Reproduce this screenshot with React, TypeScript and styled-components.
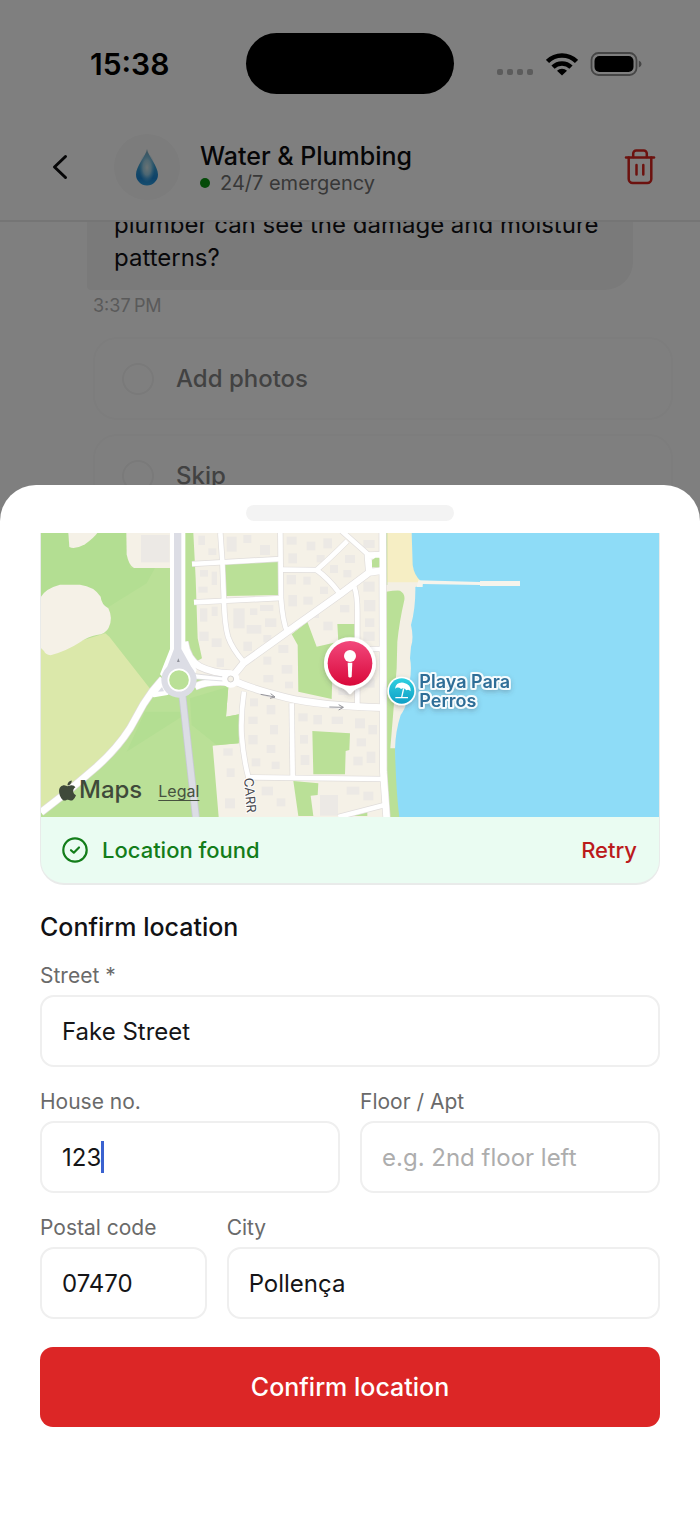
import React, { useState } from "react";
import styled, { createGlobalStyle } from "styled-components";
import { FaApple } from "react-icons/fa";

const GlobalStyle = createGlobalStyle`
  *, *::before, *::after { box-sizing: border-box; }
  body { margin: 0; background: #fff; font-family: Inter, "Noto Sans", sans-serif; color: #111114; }
  button, input { font: inherit; color: inherit; }
`;

const Screen = styled.div`
  position: relative;
  min-height: 100vh;
  display: flex;
  flex-direction: column;
  justify-content: flex-end;
  padding-top: 240px;
`;

/* Chat behind the sheet */

const Backdrop = styled.div`
  position: absolute;
  inset: 0;
  overflow: hidden;
  display: flex;
  flex-direction: column;

  &::after {
    content: "";
    position: absolute;
    inset: 0;
    background: rgba(0, 0, 0, 0.5);
  }
`;

const StatusBar = styled.div`
  display: grid;
  grid-template-columns: 1fr auto 1fr;
  align-items: center;
  padding: 33px 58px 0 90px;
  column-gap: 16px;
`;

const Clock = styled.time`
  font-size: 30px;
  font-weight: 600;
  color: #000;
`;

const Island = styled.div`
  width: 208px;
  height: 61px;
  margin-left: -16px;
  margin-right: 16px;
  border-radius: 31px;
  background: #000;
`;

const StatusIcons = styled.div`
  display: flex;
  align-items: center;
  justify-content: flex-end;
  gap: 12px;
`;

const Header = styled.header`
  display: flex;
  align-items: center;
  height: 128px;
  padding: 20px 44px 0 52px;
  border-bottom: 2px solid #ebebeb;
`;

const IconButton = styled.button`
  display: flex;
  padding: 0;
  border: 0;
  background: none;
`;

const Avatar = styled.div`
  display: flex;
  align-items: center;
  justify-content: center;
  width: 66px;
  height: 66px;
  margin: 0 20px 0 46px;
  border-radius: 50%;
  background: #f8f8f8;
`;

const HeaderText = styled.div`
  flex: 1;
  padding-top: 3px;
`;

const HeaderTitle = styled.h1`
  margin: 0;
  font-size: 25px;
  line-height: 28px;
  font-weight: 500;
  color: #0c0c0e;
`;

const Presence = styled.div`
  display: flex;
  align-items: center;
  gap: 10px;
  font-size: 20px;
  line-height: 26px;
  color: #717171;

  &::before {
    content: "";
    width: 10px;
    height: 10px;
    border-radius: 50%;
    background: #0a9612;
  }
`;

const Messages = styled.main`
  flex: 1;
  min-height: 0;
  overflow: hidden;
  padding: 0 27px 0 87px;
`;

const Bubble = styled.p`
  max-width: 546px;
  margin: -30px 0 0;
  padding: 16px 27px;
  border-radius: 28px 28px 28px 4px;
  background: #f4f4f4;
  font-size: 24px;
  line-height: 33px;
`;

const Timestamp = styled.time`
  display: block;
  margin: 4px 0 19px 6px;
  font-size: 18px;
  line-height: 24px;
  color: #b4b4b4;
`;

const Options = styled.div`
  display: grid;
  gap: 14px;
  padding-left: 6px;
`;

const Option = styled.label`
  display: flex;
  align-items: center;
  gap: 22px;
  height: 83px;
  padding-left: 27px;
  border: 2px solid #fafafa;
  border-radius: 24px;
  font-size: 24px;
  font-weight: 500;
  color: #858585;
`;

const Radio = styled.input`
  appearance: none;
  width: 32px;
  height: 32px;
  margin: 0;
  border: 2px solid #f4f4f4;
  border-radius: 50%;
`;

/* Bottom sheet */

const Sheet = styled.section`
  position: relative;
  padding: 20px 40px 93px;
  border-radius: 36px 36px 0 0;
  background: #fff;
`;

const Grabber = styled.div`
  width: 208px;
  height: 16px;
  margin: 0 auto 12px;
  border-radius: 8px;
  background: #f3f3f3;
`;

const MapCard = styled.div`
  overflow: hidden;
  border: solid #e9ebea;
  border-width: 0 1px 2px;
  border-radius: 0 0 24px 24px;
  background: #eafcf2;
`;

const MapView = styled.div`
  position: relative;

  > svg {
    display: block;
    width: 100%;
    height: 284px;
  }
`;

const Attribution = styled.div`
  position: absolute;
  left: 15px;
  bottom: 11px;
  display: flex;
  align-items: center;
  color: #3f4a3a;
`;

const Brand = styled.span`
  display: flex;
  align-items: center;
  font-size: 24px;
  line-height: 32px;
  font-weight: 500;
`;

const LegalLink = styled.a`
  margin-left: 16px;
  padding-top: 2px;
  font-size: 16px;
  line-height: 30px;
  color: #47523f;
  text-underline-offset: 3px;
`;

const Result = styled.div`
  display: flex;
  align-items: center;
  gap: 14px;
  height: 66px;
  padding: 0 22px 0 21px;
  font-size: 22px;
  font-weight: 500;
  color: #137d1a;
`;

const RetryButton = styled.button`
  margin-left: auto;
  padding: 0;
  border: 0;
  background: none;
  font-weight: 500;
  color: #bb1a1c;
`;

const Form = styled.form`
  display: grid;
  gap: 20px;
`;

const FormTitle = styled.h2`
  margin: 26px 0 -2px;
  font-size: 25px;
  line-height: 32px;
  font-weight: 500;
`;

const Row = styled.div<{ $columns: string }>`
  display: grid;
  grid-template-columns: ${(p) => p.$columns};
  gap: 20px;
`;

const Field = styled.label`
  display: grid;
  gap: 4px;
  min-width: 0;
  font-size: 21px;
  line-height: 30px;
  color: #6a6a6a;
`;

const Control = styled.span<{ $caret?: boolean }>`
  position: relative;
  display: block;

  &::after {
    content: "";
    display: ${(p) => (p.$caret ? "block" : "none")};
    position: absolute;
    left: 61px;
    top: 20px;
    width: 3px;
    height: 32px;
    background: #3a62d0;
  }
`;

const TextInput = styled.input`
  display: block;
  width: 100%;
  height: 72px;
  padding: 0 20px;
  border: 2px solid #efefef;
  border-radius: 14px;
  outline: 0;
  background: #fff;
  font-size: 24px;
  color: #151517;

  &::placeholder {
    color: #adadad;
    opacity: 1;
  }
`;

const SubmitButton = styled.button`
  height: 80px;
  margin-top: 8px;
  border: 0;
  border-radius: 13px;
  background: #dc2626;
  font-size: 25px;
  font-weight: 500;
  color: #fff;
`;

/* Map artwork, drawn at three units to the pixel */

const thinStreets = [
  "M571 24 L577 110 L582 230 Q584 300 594 335 Q606 370 642 412",
  "M486 117 L750 102",
  "M492 232 L756 219",
  "M751 24 L753 220 Q758 290 772 322",
  "M753 134 L860 135 Q900 100 952 48",
  "M860 135 Q895 160 928 204",
  "M935 18 L1022 95",
  "M973 185 Q982 210 982 260 L982 540",
  "M982 372 L1060 372",
  "M785 535 L788 756",
  "M642 500 Q632 570 635 630 Q640 700 656 760",
  "M652 757 L1060 762",
  "M925 876 L1064 840",
];

const wideStreets = [
  "M33 862 L110 802 L200 725 Q262 670 300 610 L340 538 L366 500 L398 462",
  "M602 462 L640 415 L770 322 L930 208 L1018 142 L1060 136",
  "M1018 142 L1014 92 L1060 90",
  "M602 462 Q650 488 770 518 Q870 542 1060 548",
  "M1058 24 L1060 740 L1070 880",
  "M464 350 Q472 405 510 425 Q548 444 602 446",
  "M495 485 Q535 466 602 472",
];

const greens = [
  "584,112 745,108 745,210 588,213",
  "785,328 832,290 860,365 925,350 922,297 974,297 974,345 910,362 905,522 805,500 803,360",
  "847,618 960,625 958,675 947,678 945,748 850,748",
  "790,768 865,775 863,810 842,812 850,873 805,873",
  "965,873 1012,862 1012,873",
];

const buildings: [number, number, number, number][] = [
  [333, 30, 86, 82], [505, 32, 20, 28], [535, 70, 24, 20], [510, 135, 24, 20], [545, 140, 16, 40],
  [505, 185, 28, 18], [510, 250, 22, 40], [545, 245, 18, 28], [508, 320, 28, 28], [545, 340, 30, 26],
  [560, 400, 22, 26], [590, 35, 30, 45], [640, 30, 24, 24], [690, 60, 30, 30], [610, 250, 34, 60],
  [660, 250, 22, 20], [690, 240, 40, 18], [705, 280, 34, 26], [650, 300, 44, 26], [640, 350, 26, 28],
  [700, 330, 24, 22], [770, 35, 30, 24], [775, 85, 26, 30], [830, 50, 26, 26], [880, 40, 26, 30],
  [860, 90, 24, 22], [770, 150, 28, 28], [820, 155, 22, 24], [775, 210, 26, 34], [820, 215, 28, 24],
  [870, 185, 24, 22], [900, 120, 24, 24], [945, 90, 30, 24], [940, 135, 24, 22], [1000, 45, 34, 24],
  [1000, 170, 34, 30], [1002, 225, 34, 34], [1005, 280, 28, 26], [1000, 320, 34, 28], [930, 240, 28, 22],
  [880, 290, 28, 26], [845, 255, 22, 24], [745, 360, 30, 24], [700, 395, 24, 24], [755, 420, 32, 26],
  [700, 450, 30, 22], [765, 470, 24, 20], [1000, 400, 30, 34], [1000, 460, 34, 28], [925, 460, 36, 50],
  [660, 520, 24, 24], [710, 540, 26, 28], [655, 575, 28, 22], [720, 600, 24, 28], [655, 630, 28, 28],
  [710, 660, 26, 24], [665, 700, 26, 24], [725, 710, 24, 22], [805, 565, 28, 24], [850, 570, 26, 28],
  [905, 575, 34, 22], [975, 580, 30, 30], [1015, 600, 26, 28], [980, 640, 28, 24], [810, 630, 24, 26],
  [812, 690, 26, 30], [970, 695, 28, 26], [1010, 680, 26, 34], [870, 810, 54, 62], [950, 785, 38, 24],
  [1000, 800, 30, 26], [695, 785, 34, 26], [740, 820, 26, 24], [580, 670, 28, 22],
  [590, 730, 24, 26], [585, 820, 30, 30],
];

const TownMap = () => (
  <svg viewBox="33 24 1854 852" preserveAspectRatio="xMidYMid slice" role="img" aria-label="Map of the found location">
    <defs>
      <linearGradient id="pin" x1="0" y1="0" x2="0" y2="1">
        <stop offset="0" stopColor="#f2487c" />
        <stop offset="1" stopColor="#d9083a" />
      </linearGradient>
      <linearGradient id="beach" x1="0" y1="0" x2="0" y2="1">
        <stop offset="0" stopColor="#2fd0e0" />
        <stop offset="1" stopColor="#0f9fc6" />
      </linearGradient>
      <filter id="shadow" x="-30%" y="-30%" width="160%" height="170%">
        <feDropShadow dx="0" dy="6" stdDeviation="8" floodColor="#3c3c50" floodOpacity="0.3" />
      </filter>
    </defs>
    <rect x="33" y="24" width="1854" height="852" fill="#f5f1e7" />

    {/* fields and parks */}
    <path d="M33 24H490L497 160L503 340L516 400L510 420L595 485L588 575L628 568L626 655L548 662L566 876H33Z" fill="#bae097" />
    <path d="M33 24H290L300 129H375L350 175L232 248L150 190L33 215Z" fill="#b3de92" />
    <path d="M480 520L595 485L588 575L628 568L626 655L560 660L485 600Z" fill="#b3de92" />
    <path d="M290 680L345 560L450 560L455 575Z" fill="#b3de92" />
    <path d="M115 24L118 66Q135 74 165 58Q192 38 202 24Z" fill="#f5f1e7" />
    <path d="M289 24L290 88Q296 122 312 129H424V24Z" fill="#f5f1e7" />
    <path d="M33 370L60 390L160 345L226 325L238 335L365 497L300 610L200 725L33 862Z" fill="#dbe8aa" />
    <path d="M33 215Q48 190 90 179L150 179Q192 184 212 215Q214 238 235 250Q250 280 236 308Q228 326 200 330Q175 334 150 352Q110 378 62 391Q45 388 42 378L33 370Z" fill="#f5f1e7" />
    <path d="M490 415L516 400L600 440V462H496Z" fill="#f5f1e7" />
    {greens.map((points) => <polygon key={points} points={points} fill="#bae097" />)}
    {buildings.map(([x, y, w, h]) => <rect key={`${x}-${y}`} x={x} y={y} width={w} height={h} fill="#ece9e5" />)}

    {/* coast */}
    <path d="M1066 24H1145L1150 130L1180 175L1068 180Z" fill="#f6eec4" />
    <path d="M1066 172L1180 172L1165 300L1142 500L1094 672H1066Z" fill="#f3efe4" />
    <path d="M1066 24H1072V180H1066Z" fill="#bae097" />
    <path d="M1068 200Q1095 196 1110 197Q1126 206 1123 225Q1108 290 1102 350L1100 430L1090 560L1081 670H1096L1102 780L1112 876H1080Q1070 760 1068 650Z" fill="#bae097" />
    <path d="M1145 24L1148 120Q1152 150 1172 168L1178 180L1156 186Q1157 250 1143 300Q1152 340 1143 365L1140 400Q1146 430 1139 470Q1135 540 1112 570Q1096 620 1095 672Q1098 800 1108 876H1890V24Z" fill="#8edcf7" />
    <path d="M1165 166L1350 171V168H1470V183H1350V180L1178 177V186H1160Z" fill="#f6f4ec" />

    {/* streets */}
    <g fill="none" strokeLinejoin="round">
      <g stroke="#e0dddb">
        {thinStreets.map((d) => <path key={d} d={d} strokeWidth="18" />)}
        {wideStreets.map((d) => <path key={d} d={d} strokeWidth="24" />)}
      </g>
      <g stroke="#fff">
        <path d="M443 20V372" strokeWidth="46" />
        {thinStreets.map((d) => <path key={d} d={d} strokeWidth="14" />)}
        {wideStreets.map((d) => <path key={d} d={d} strokeWidth="20" />)}
      </g>
      <path d="M457 510L498 880" stroke="#c8cad4" strokeWidth="23" />
      <path d="M457 510L498 880" stroke="#dcdde5" strokeWidth="18" />
    </g>
    <path d="M1026 106L1036 98H1048V127H1026Z" fill="#bae097" />
    <path d="M420 372L390 448L410 470H485L500 435L466 372Z" fill="#fff" />
    <path d="M432 20H454V372L492 440L485 475H410L402 450L432 372Z" fill="#dcdde5" />
    <path d="M492 446L580 456V468L496 462Z" fill="#fff" stroke="#d0d0d6" strokeWidth="2" />
    <path d="M372 512L398 478L412 505Z" fill="#fff" stroke="#fff" strokeWidth="10" strokeLinejoin="round" />
    <path d="M384 500L396 486L402 499Z" fill="#dcdde5" />
    <circle cx="447" cy="465" r="53" fill="#dcdde5" />
    <circle cx="447" cy="465" r="32" fill="#bae097" stroke="#fff" strokeWidth="5" />
    <path d="M445 400L449 411H441Z" fill="#8d8f98" />
    <circle cx="602" cy="462" r="26" fill="#fff" />
    <circle cx="602" cy="462" r="9" fill="#f5f1e7" stroke="#d6d4d2" strokeWidth="3" />
    <g fill="none" stroke="#94949a" strokeWidth="3">
      <path d="M692 508L735 516M722 506L735 516L720 520" />
      <path d="M898 546L940 547M926 539L940 547L926 555" />
    </g>
    <text transform="translate(642 760) rotate(85)" fontSize="39" fill="#4a4a50" stroke="#fff" strokeWidth="5" paintOrder="stroke">CARR</text>

    {/* address pin */}
    <g filter="url(#shadow)">
      <path d="M960 337a78 78 0 0 1 31 149.600q-18 5-27 19q-4 4-8 0q-9-14-27-19A78 78 0 0 1 960 337Z" fill="#fff" />
    </g>
    <circle cx="960" cy="415" r="67" fill="url(#pin)" />
    <circle cx="960" cy="393" r="18" fill="#fff" />
    <path d="M953 413H967L965 455Q960 460 955 455Z" fill="#fff" />

    {/* beach marker */}
    <circle cx="1115" cy="498" r="43" fill="#fff" filter="url(#shadow)" />
    <circle cx="1115" cy="498" r="38" fill="url(#beach)" />
    <path d="M1095 491Q1098 470 1121 473Q1144 478 1142 499Q1136 491 1129 496Q1122 486 1113 492Q1104 484 1095 491Z" fill="#fff" />
    <path d="M1121 490L1115 517M1096 518H1134" fill="none" stroke="#fff" strokeWidth="4" />
    <g fontSize="54" fontWeight="600" fill="#2d6d97" stroke="#fff" strokeOpacity="0.900" strokeWidth="12" strokeLinejoin="round" paintOrder="stroke" filter="url(#shadow)">
      <text x="1168" y="489">Playa Para</text>
      <text x="1168" y="546">Perros</text>
    </g>
  </svg>
);

const WifiIcon = () => (
  <svg width="32" height="24" viewBox="0 0 32 24" aria-hidden="true">
    <g fill="none" stroke="#000" strokeWidth="4.500">
      <path d="M1.500 9.400a20.500 20.500 0 0 1 29 0" />
      <path d="M7 15.200a12.700 12.700 0 0 1 18 0" />
    </g>
    <path d="M11 18.800a7 7 0 0 1 10 0L16 23.500Z" />
  </svg>
);

const BatteryIcon = () => (
  <svg width="52" height="24" viewBox="0 0 52 24" aria-hidden="true">
    <rect x="1.500" y="1" width="45" height="22" rx="7" fill="none" stroke="#8c8c8c" strokeWidth="1.800" />
    <rect x="4.500" y="4" width="39" height="16" rx="5" />
    <path d="M48.800 8.500q2.800 1 2.800 3.500t-2.800 3.500Z" fill="#8c8c8c" />
  </svg>
);

const SignalSlot = styled.span`
  display: flex;
  padding-top: 16px;
`;

const SignalDots = () => (
  <svg width="38" height="6" viewBox="0 0 38 6" aria-hidden="true">
    {[0, 10, 20, 30].map((x) => <rect key={x} x={x + 1} width="6" height="6" rx="2" fill="#b8b8b8" />)}
  </svg>
);

const Droplet = () => (
  <svg width="24" height="37" viewBox="0 0 24 37" aria-hidden="true">
    <defs>
      <linearGradient id="drop" x1="0" y1="0" x2="0" y2="1">
        <stop offset="0" stopColor="#8fb4c4" />
        <stop offset="0.450" stopColor="#3d9fd0" />
        <stop offset="0.800" stopColor="#1a86d4" />
        <stop offset="1" stopColor="#2f9ee0" />
      </linearGradient>
      <radialGradient id="shine" cx="0.5" cy="0.45" r="0.5">
        <stop offset="0" stopColor="#d6e8ea" />
        <stop offset="0.500" stopColor="#b4dcea" stopOpacity="0.800" />
        <stop offset="1" stopColor="#6fc0ea" stopOpacity="0" />
      </radialGradient>
    </defs>
    <path d="M12 0C13 7 23 17 23 25.500a11 11 0 0 1-22 0C1 17 11 7 12 0Z" fill="url(#drop)" />
    <ellipse cx="12" cy="20" rx="8" ry="15" fill="url(#shine)" />
  </svg>
);

const TrashIcon = () => (
  <svg width="32" height="36" viewBox="0 0 32 36" fill="none" stroke="#d9241e" strokeWidth="2.500" strokeLinecap="round" strokeLinejoin="round" aria-hidden="true">
    <path d="M2 8.500H30" />
    <path d="M9.200 8V4.500a3 3 0 0 1 3-3h7.600a3 3 0 0 1 3 3V8" />
    <path d="M4.700 8.500V30a4 4 0 0 0 4 4H23.300a4 4 0 0 0 4-4V8.500" />
    <path d="M12.500 16V25.500M19.300 16V25.500" />
  </svg>
);

const App = () => {
  const [address, setAddress] = useState({
    street: "Fake Street",
    house: "123",
    floor: "",
    postal: "07470",
    city: "Pollença",
  });
  const bind = (key: keyof typeof address) => ({
    name: key,
    value: address[key],
    onChange: (e: React.ChangeEvent<HTMLInputElement>) =>
      setAddress({ ...address, [key]: e.target.value }),
  });

  return (
    <>
      <GlobalStyle />
      <Screen>
        <Backdrop>
          <StatusBar>
            <Clock>15:38</Clock>
            <Island />
            <StatusIcons>
              <SignalSlot><SignalDots /></SignalSlot>
              <WifiIcon />
              <BatteryIcon />
            </StatusIcons>
          </StatusBar>
          <Header>
            <IconButton type="button" aria-label="Back">
              <svg width="16" height="26" viewBox="0 0 16 26" fill="none" stroke="#0c0c0e" strokeWidth="3" strokeLinecap="round" strokeLinejoin="round">
                <path d="M13.500 2.500L2.500 13L13.500 23.500" />
              </svg>
            </IconButton>
            <Avatar><Droplet /></Avatar>
            <HeaderText>
              <HeaderTitle>Water &amp; Plumbing</HeaderTitle>
              <Presence>24/7 emergency</Presence>
            </HeaderText>
            <IconButton type="button" aria-label="Delete chat"><TrashIcon /></IconButton>
          </Header>
          <Messages>
            <Bubble>plumber can see the damage and moisture patterns?</Bubble>
            <Timestamp>{"3:37\u202fPM"}</Timestamp>
            <Options>
              <Option><Radio type="radio" name="photos" />Add photos</Option>
              <Option><Radio type="radio" name="photos" />Skip</Option>
            </Options>
          </Messages>
        </Backdrop>

        <Sheet aria-label="Confirm location">
          <Grabber />
          <MapCard>
            <MapView>
              <TownMap />
              <Attribution>
                <Brand><FaApple size={23} aria-hidden="true" />Maps</Brand>
                <LegalLink href="#legal">Legal</LegalLink>
              </Attribution>
            </MapView>
            <Result>
              <svg width="26" height="26" viewBox="0 0 26 26" fill="none" stroke="currentColor" strokeWidth="2.200" strokeLinecap="round" strokeLinejoin="round" aria-hidden="true">
                <circle cx="13" cy="13" r="11.700" />
                <path d="M9 13.200L11.800 15.700L17 10.500" />
              </svg>
              Location found
              <RetryButton type="button">Retry</RetryButton>
            </Result>
          </MapCard>

          <Form onSubmit={(e) => e.preventDefault()}>
            <FormTitle>Confirm location</FormTitle>
            <Field>
              Street *
              <Control><TextInput {...bind("street")} required /></Control>
            </Field>
            <Row $columns="1fr 1fr">
              <Field>
                House no.
                <Control $caret><TextInput {...bind("house")} /></Control>
              </Field>
              <Field>
                Floor / Apt
                <Control><TextInput {...bind("floor")} placeholder="e.g. 2nd floor left" /></Control>
              </Field>
            </Row>
            <Row $columns="5fr 13fr">
              <Field>
                Postal code
                <Control><TextInput {...bind("postal")} /></Control>
              </Field>
              <Field>
                City
                <Control><TextInput {...bind("city")} /></Control>
              </Field>
            </Row>
            <SubmitButton type="submit">Confirm location</SubmitButton>
          </Form>
        </Sheet>
      </Screen>
    </>
  );
};

export default App;
